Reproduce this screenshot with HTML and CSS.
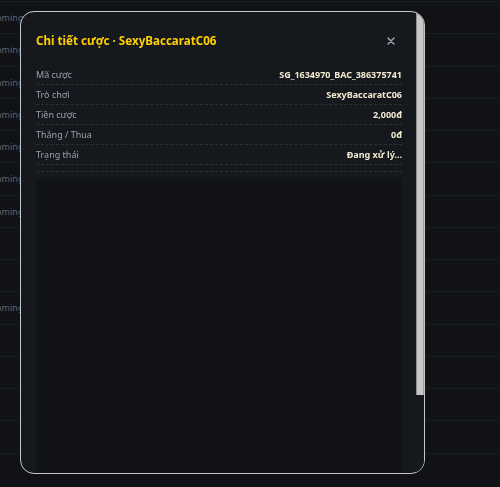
FILE: index.html
```html
<!DOCTYPE html>
<html lang="vi">
<head>
<meta charset="utf-8">
<title>Chi tiết cược</title>
<link rel="stylesheet" href="styles.css">
</head>
<body>
<div class="page">
  <div class="list">
    <div class="list-row"><span class="cell">Gaming</span></div>
    <div class="list-row"><span class="cell">Gaming</span></div>
    <div class="list-row"><span class="cell">Gaming</span></div>
    <div class="list-row"><span class="cell">Gaming</span></div>
    <div class="list-row"><span class="cell">Gaming</span></div>
    <div class="list-row"><span class="cell">Gaming</span></div>
    <div class="list-row"><span class="cell">Gaming</span></div>
    <div class="list-row"></div>
    <div class="list-row"></div>
    <div class="list-row"><span class="cell">Gaming</span></div>
    <div class="list-row"></div>
    <div class="list-row"></div>
    <div class="list-row"></div>
    <div class="list-row"></div>
    <div class="list-row"></div>
  </div>
</div>
<div class="modal">
  <div class="modal-body">
    <div class="modal-head">
      <h2 class="modal-title">Chi tiết cược · SexyBaccaratC06</h2>
      <button class="close" aria-label="Đóng">
        <svg width="8" height="8" viewBox="0 0 8 8"><path d="M1 1 L7 7 M7 1 L1 7" stroke="#9ea3ab" stroke-width="1.5" stroke-linecap="round"/></svg>
      </button>
    </div>
    <div class="rows">
      <div class="row"><span class="label">Mã cược</span><span class="value">SG_1634970_BAC_386375741</span></div>
      <div class="row"><span class="label">Trò chơi</span><span class="value">SexyBaccaratC06</span></div>
      <div class="row"><span class="label">Tiền cược</span><span class="value">2,000đ</span></div>
      <div class="row"><span class="label">Thắng / Thua</span><span class="value">0đ</span></div>
      <div class="row"><span class="label">Trạng thái</span><span class="value">Đang xử lý...</span></div>
    </div>
    <div class="divider"></div>
    <div class="detail-box"></div>
  </div>
  <div class="scrollbar"><div class="thumb"></div></div>
</div>
</body>
</html>
```

FILE: styles.css
```css
html, body {
  margin: 0;
  padding: 0;
  background: #101216;
  font-family: "Noto Sans", "Open Sans", sans-serif;
  overflow: hidden;
}
.page {
  width: 500px;
  height: 487px;
}
.list {
  padding-top: 1px;
}
.list-row {
  box-sizing: border-box;
  height: 32.25px;
  border-top: 1px solid #191c21;
  display: flex;
  align-items: center;
}
.cell {
  font-size: 9px;
  color: #60656e;
  margin-left: -10px;
}
.modal {
  position: fixed;
  left: 20px;
  top: 11px;
  width: 405px;
  height: 463px;
  box-sizing: border-box;
  border: 1px solid #c6c6c6;
  border-radius: 14px;
  background: #15181d;
  overflow: hidden;
  display: flex;
}
.modal-body {
  flex: 1;
  min-width: 0;
  padding: 19px 14px 16px 15px;
  overflow: hidden;
}
.scrollbar {
  flex: none;
  width: 8px;
  background: #15181d;
  padding-top: 1px;
}
.thumb {
  height: 382px;
  background: #c6c6c6;
  box-shadow: inset 1px 0 0 #8d8d8d, inset -1px 0 0 #9a9a9a;
}
.modal-head {
  display: flex;
  align-items: center;
  justify-content: space-between;
  height: 20px;
  margin-bottom: 14px;
}
.modal-title {
  margin: 0;
  font-size: 11.6px;
  font-weight: 700;
  line-height: 20px;
  color: #ffcf00;
}
.close {
  width: 22px;
  height: 20px;
  padding: 0;
  border: 0;
  background: transparent;
  display: flex;
  align-items: center;
  justify-content: center;
}
.rows {
  display: flex;
  flex-direction: column;
}
.row {
  box-sizing: border-box;
  height: 20px;
  border-bottom: 1px dashed #2c2f35;
  display: flex;
  align-items: center;
  justify-content: space-between;
  font-size: 9px;
}
.label {
  color: #9ca1a9;
}
.value {
  color: #f3ead0;
  font-weight: 700;
}
.divider {
  margin-top: 6px;
  border-top: 1px dashed #2c2f35;
}
.detail-box {
  margin-top: 7px;
  height: 373px;
  background: #111317;
  border-radius: 4px;
}
```
